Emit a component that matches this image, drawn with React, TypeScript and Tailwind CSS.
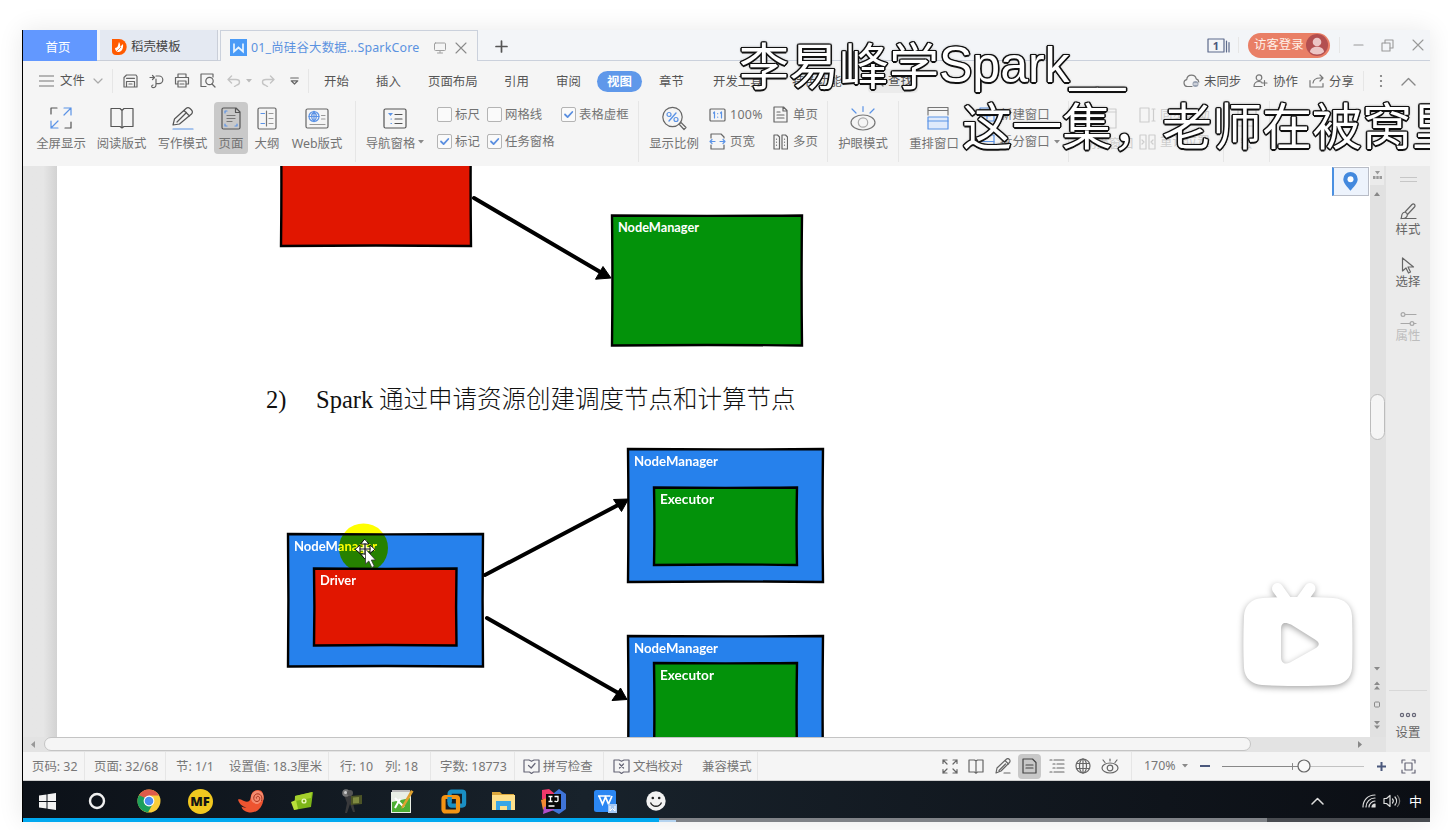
import React from "react";

type P = { children?: React.ReactNode; className?: string };

/* Line drawing on its own view box */
function Ico({ w, h, color = "#5a5a5a", sw = 1.2, children }: { w: number; h: number; color?: string; sw?: number; children: React.ReactNode }) {
  return (
    <svg width={w} height={h} viewBox={`0 0 ${w} ${h}`} fill="none" stroke={color} strokeWidth={sw} strokeLinecap="round" strokeLinejoin="round" className="block flex-none">
      {children}
    </svg>
  );
}

const BLUE = "#5b93e6";

function Cell({ children, className = "" }: P) {
  return <div className={`flex flex-none items-center ${className}`}>{children}</div>;
}

function Tri({ color = "#8a8a8a" }: { color?: string }) {
  return (
    <Ico w={6} h={4} color="none">
      <path d="M0 0h6L3 3.6z" fill={color} />
    </Ico>
  );
}

function Divider({ className = "" }: P) {
  return <div className={`flex-none border-l border-[#e6e6e6] ${className}`} />;
}

function Big({ label, className = "", children }: P & { label: string }) {
  return (
    <div className={`flex flex-none flex-col items-center pt-1 ${className}`}>
      <div className="flex h-[26px] items-center">{children}</div>
      <div className="mt-[3px] h-5 leading-5">{label}</div>
    </div>
  );
}

function Check({ label, on = false, className = "" }: P & { label: string; on?: boolean }) {
  return (
    <div className={`flex h-[27px] flex-none items-center gap-[3px] ${className}`}>
      <Ico w={15} h={15} color="#b4b4b4" sw={1}>
        <rect x=".5" y=".5" width="14" height="14" rx="1.5" fill="#fafafa" />
        {on && <path d="M4 7.500l2.600 2.600L11.300 5" stroke="#5b8fe0" strokeWidth="1.800" />}
      </Ico>
      <span>{label}</span>
    </div>
  );
}

function TabBar() {
  return (
    <div className="flex h-[31px] flex-none border-b border-[#cbd1dc] bg-[#f3f5f8]">
      <div className="-mb-px flex w-[74px] flex-none items-center justify-center bg-[#6298ff] pt-[4px] pr-1 text-white">首页</div>
      <div className="-mb-px ml-[3px] flex w-[118px] flex-none items-center border-r border-b border-[#c9ced8] bg-[#e4e9f2] pt-[4px] pl-3 text-[#444]">
        <svg width="15" height="16" viewBox="0 0 15 16" className="block">
          <path d="M0 0h7a7.500 7.800 0 0 1 0 16H4a4 4 0 0 1-4-4z" fill="#ff5a00" />
          <path d="M3 9c3 0 3-3 4-6 1 2 1.500 3 1 5l3-3c.5 4-1 8-4.500 8C4.500 13 3 11 3 9z" fill="#fff" />
          <path d="M5 12c1-1.500 2.500-2 4-4" stroke="#ff5a00" strokeWidth=".8" fill="none" />
        </svg>
        <span className="ml-1">稻壳模板</span>
      </div>
      <div className="-mb-px ml-0.5 flex w-[258px] flex-none items-center border-t border-r border-l border-[#cbd1dc] bg-[#f5f5f5] pt-[3px] pl-[9px] text-[#5b92e0]">
        <svg width="17" height="17" viewBox="0 0 17 17" className="block flex-none">
          <rect width="17" height="17" fill="#4a9bf7" />
          <path d="M4 4.500v8l4.500-4 4.500 4v-8" fill="none" stroke="#e8f4ff" strokeWidth="1.700" />
        </svg>
        <span className="ml-1 w-[183px] flex-none whitespace-nowrap tracking-[0.2px]">01_尚硅谷大数据...SparkCore</span>
        <Ico w={12} h={12} color="#a0a0a0" sw={1}>
          <rect x=".5" y="1" width="11" height="7.500" rx="1" />
          <path d="M6 8.500v2M3.500 11h5" />
        </Ico>
        <div className="ml-[9px]">
          <Ico w={12} h={12} color="#8a8a8a" sw={1.1}>
            <path d="M1 1l10 10M11 1L1 11" />
          </Ico>
        </div>
      </div>
      <Cell className="ml-[17px] pt-[3px]">
        <Ico w={13} h={13} color="#555" sw={1.7}>
          <path d="M6.500 1v11M1 6.500h11" />
        </Ico>
      </Cell>
      <div className="ml-auto flex items-center pr-[6px]">
        <Ico w={23} h={15} color="#5d6a8c" sw={1.2}>
          <rect x="1" y="1" width="16" height="13" />
          <path d="M19.500 3v11M22 4.500v9.500" />
          <text x="9" y="11.500" fontSize="11" fontWeight="700" textAnchor="middle" fill="#4b587c" stroke="none">1</text>
        </Ico>
        <Divider className="ml-2 h-4" />
        <div className="ml-[9px] flex h-[25px] w-[82px] items-center justify-between rounded-full bg-[#e97f66] pr-0.5 pl-[6px] text-[#fff0e8]">
          访客登录
          <svg width="22" height="22" viewBox="0 0 22 22" className="block">
            <circle cx="11" cy="11" r="11" fill="#b34f50" />
            <circle cx="11" cy="8" r="4.300" fill="#ecc5c5" />
            <path d="M4 18c0-7 14-7 14 0a11 11 0 0 1-14 0z" fill="#ecc5c5" />
          </svg>
        </div>
        <Divider className="mr-[13px] ml-[9px] h-4" />
        <Ico w={11} h={12} color="#999"><path d="M1 6h9" /></Ico>
        <div className="ml-[17px]">
          <Ico w={13} h={13} color="#999" sw={1.1}>
            <rect x="1" y="4" width="8" height="8" />
            <path d="M4 4V1h8v8H9" />
          </Ico>
        </div>
        <div className="ml-[18px]">
          <Ico w={12} h={12} color="#999" sw={1.1}><path d="M1 1l10 10M11 1L1 11" /></Ico>
        </div>
      </div>
    </div>
  );
}

function MenuRow() {
  return (
    <div className="flex h-10 flex-none items-center pl-4 whitespace-nowrap text-[#555]">
      <Cell className="w-[21px]"><Ico w={15} h={12} color="#777"><path d="M.5 1h14M.5 6h14M.5 11h14" /></Ico></Cell>
      <Cell className="w-[33px]">文件</Cell>
      <Cell className="w-[19px]"><Ico w={10} h={6} color="#aaa"><path d="M1 1l4 4 4-4" /></Ico></Cell>
      <Divider className="h-6 w-[11px]" />
      <Cell className="w-[26px] pb-px">
        <Ico w={15} h={14} color="#666">
          <path d="M3.500 1h9.500l1 1.500V13H1V3.500zM3.500 13V7.500h8V13M3.500 4.300h8M6 10h3" />
        </Ico>
      </Cell>
      <Cell className="w-[25px]">
        <Ico w={15} h={15} color="#666">
          <path d="M1 3.500h4M3.500 1.500L5.500 3.500 3.500 5.500M7 2h3a3.800 3.800 0 0 1 0 7.600H7M7 5v5.500c0 2-1.500 3.200-3 3.200s-2-2.200 0-2.700" />
        </Ico>
      </Cell>
      <Cell className="w-[26px] pb-px">
        <Ico w={16} h={15} color="#666">
          <path d="M4 4.500V1h8v3.500M4 11H1.500V4.500h13V11H12M4 8h8v6H4zM6 11h4" />
        </Ico>
      </Cell>
      <Cell className="w-[27px] pb-px">
        <Ico w={16} h={15} color="#666">
          <path d="M6 13.500H1V1h12v3" />
          <circle cx="9.500" cy="8" r="3.700" />
          <path d="M12 11l3 3" />
        </Ico>
      </Cell>
      <Cell className="w-[19px]"><Ico w={14} h={12} color="#c4c4c4" sw={1.4}><path d="M4.500 1L1 4.500 4.500 8M1.500 4.500H9c5 0 4 5 1 5.500L7.500 11.500" /></Ico></Cell>
      <Cell className="w-[15px]"><Tri color="#bbb" /></Cell>
      <Cell className="w-[29px]"><Ico w={14} h={12} color="#c4c4c4" sw={1.400}><path d="M9.500 1L13 4.500 9.500 8M12.500 4.500H5c-5 0-4 5-1 5.500L6.500 11.500" /></Ico></Cell>
      <Cell className="w-[18px]"><Ico w={9} h={8} color="#666"><path d="M.7 1h7.600M1.200 3.800h6.600L4.500 7z" /></Ico></Cell>
      <Divider className="h-6 w-4" />
      <Cell className="w-[52px] pt-px">开始</Cell>
      <Cell className="w-[52px] pt-px">插入</Cell>
      <Cell className="w-[76px] pt-px">页面布局</Cell>
      <Cell className="w-[52px] pt-px">引用</Cell>
      <Cell className="w-[41px] pt-px">审阅</Cell>
      <div className="mr-[17px] flex h-[21px] w-[45px] flex-none items-center justify-center rounded-full bg-[#5f98ea] pt-px font-bold text-white">视图</div>
      <Cell className="w-[54px] pt-px">章节</Cell>
      <Cell className="w-[79px] pt-px">开发工具</Cell>
      <Cell className="w-[76px] pt-px">特色功能</Cell>
      <Cell className="h-6 w-[50px] rounded bg-[#ebebeb] pl-1">
        <Ico w={12} h={12} color="#777"><circle cx="5" cy="5" r="4" /><path d="M8 8l3 3" /></Ico>
        <span className="ml-1">查找</span>
      </Cell>
      <div className="mr-[14px] ml-auto flex items-center">
        <Cell className="w-[21px]">
          <Ico w={17} h={14} color="#777">
            <path d="M9 12.500H4.500a3.500 3.500 0 0 1-.8-6.900C4 3 6 1.200 8.500 1.200c2.400 0 4.200 1.500 4.700 3.700 1.500.5 2.500 1.800 2.600 3.100" />
            <circle cx="12.500" cy="10" r="3" fill="#9aa3b3" stroke="none" />
            <path d="M11 10h3" stroke="#fff" />
          </Ico>
        </Cell>
        <Cell className="w-[49px] pt-px">未同步</Cell>
        <Cell className="w-5">
          <Ico w={15} h={14} color="#777">
            <circle cx="6" cy="3.700" r="2.800" />
            <path d="M9 12.500H1c0-3.500 2-5 5-5 1 0 2 .2 2.700.7M11.500 6.500v5M9 9h5" />
          </Ico>
        </Cell>
        <Cell className="w-9 pt-px">协作</Cell>
        <Cell className="w-5">
          <Ico w={16} h={14} color="#777">
            <path d="M1 6.500V13h13V9.500M4 9c.5-3.500 3-5 7-5h3M11 1l3 3-3 3" />
          </Ico>
        </Cell>
        <Cell className="w-[34px] pt-px">分享</Cell>
        <Divider className="h-5 w-4" />
        <Cell className="w-[22px]">
          <Ico w={4} h={14} color="none">
            <circle cx="2" cy="2" r="1.100" fill="#777" /><circle cx="2" cy="7" r="1.100" fill="#777" /><circle cx="2" cy="12" r="1.100" fill="#777" />
          </Ico>
        </Cell>
        <Ico w={15} h={9} color="#888" sw={1.400}><path d="M1 8l6.500-6.500L14 8" /></Ico>
      </div>
    </div>
  );
}

function Ribbon() {
  return (
    <div className="flex h-[65px] flex-none pl-2 whitespace-nowrap text-[#737373]">
      <Big label="全屏显示" className="w-[60px]">
        <Ico w={22} h={22} color="#555">
          <path d="M1 7V1h6M21 15v6h-6" />
          <path d="M14 1h7v7M21 1l-7 7M1 14v7h7M1 21l7-7" stroke={BLUE} />
        </Ico>
      </Big>
      <Big label="阅读版式" className="w-[61px]">
        <Ico w={24} h={22} color="#555">
          <path d="M12 3.500L10 1.500H1v18h9l2 1.500 2-1.500h9v-18h-9zM12 3.500V21" />
        </Ico>
      </Big>
      <Big label="写作模式" className="w-[61px]">
        <Ico w={24} h={24} color="#555">
          <path d="M2 19l1.500-6L15 2.500a3 3 0 0 1 4 0l1.500 1.500a3 3 0 0 1 0 4L8.500 18zM13 4.500l5.500 5.500M15.500 6.500L6 16" />
          <path d="M2 23h20" stroke={BLUE} />
        </Ico>
      </Big>
      <div className="mt-px ml-px flex h-[52px] w-[34px] flex-none flex-col items-center rounded bg-[#c9c9c9] pt-[3px]">
        <div className="flex h-[26px] items-center">
          <Ico w={20} h={23} color="#555">
            <path d="M1 2.500A1.500 1.500 0 0 1 2.500 1H15l4 4v15.500a1.500 1.500 0 0 1-1.500 1.500h-15A1.500 1.500 0 0 1 1 20.500zM14.500 1v4.500H19" />
            <path d="M6 8.500h8M6 11.500h8M6 14.500h5" stroke="#777" />
            <path d="M4 6V4h2M4 17v2h2M16 17v2h-2" stroke={BLUE} />
          </Ico>
        </div>
        <div className="mt-[3px] h-5 leading-5">页面</div>
      </div>
      <Big label="大纲" className="w-[38px]">
        <Ico w={20} h={23} color="#666">
          <rect x="1" y="1" width="18" height="21" rx="1.500" />
          <path d="M9.500 4v15" stroke="#777" />
          <path d="M12 6.500h4M12 11.500h4M12 16.500h4" stroke="#999" />
          <path d="M4 6.500h3.500M4 16.500h3.500" stroke={BLUE} />
        </Ico>
      </Big>
      <Big label="Web版式" className="w-[62px]">
        <Ico w={24} h={21} color="#666">
          <rect x="1" y="1" width="22" height="19" rx="1.500" />
          <circle cx="9" cy="8.500" r="5" stroke={BLUE} />
          <path d="M4 8.500h10M9 3.500v10M9 3.500c-3.200 3-3.200 7 0 10M9 3.500c3.200 3 3.200 7 0 10" stroke={BLUE} />
          <path d="M16.500 7.500h3.500M16.500 11h3.500M5 16.500h15" stroke="#999" />
        </Ico>
      </Big>
      <Divider className="ml-[7px] h-[61px]" />
      <Big label="导航窗格" className="ml-1 w-[61px]">
        <div className="pl-2">
          <Ico w={24} h={21} color="#555">
            <rect x="1" y="1" width="22" height="19" rx="1.500" />
            <path d="M12 6.500h7M12 11h7M12 15.500h7" />
            <path d="M8 11h.5M8 15.500h.5" stroke={BLUE} />
            <path d="M5 5h5L7.500 8z" fill={BLUE} stroke="none" />
          </Ico>
        </div>
      </Big>
      <div className="-ml-1 w-5 flex-none pt-[39px] pl-px"><Tri /></div>
      <div className="w-[201px] flex-none">
        <div className="flex">
          <Check label="标尺" className="w-[50px]" />
          <Check label="网格线" className="w-[74px]" />
          <Check label="表格虚框" on />
        </div>
        <div className="flex">
          <Check label="标记" on className="w-[50px]" />
          <Check label="任务窗格" on />
        </div>
      </div>
      <Divider className="h-[61px]" />
      <Big label="显示比例" className="ml-[5px] w-[60px]">
        <Ico w={26} h={25} color="#666">
          <circle cx="11.500" cy="11" r="9.700" />
          <path d="M18 18l2-1.500 5 5-2 2z" />
          <path d="M8 15l7-8" stroke={BLUE} strokeWidth="1.400" />
          <circle cx="8" cy="8.500" r="2" stroke={BLUE} /><circle cx="15" cy="13.500" r="2" stroke={BLUE} />
        </Ico>
      </Big>
      <div className="ml-[5px] w-16 flex-none">
        <div className="flex h-[27px] items-center gap-1">
          <Ico w={17} h={14} color="#666">
            <rect x="1" y="1" width="15" height="12" rx="1" />
            <path d="M4.500 5L5.500 4v6M11.500 5l1-1v6M8.700 5.500v.2M8.700 9v.2" stroke={BLUE} />
          </Ico>
          <span className="tracking-[0.3px]">100%</span>
        </div>
        <div className="flex h-[27px] items-center gap-1">
          <Ico w={17} h={17} color="#666">
            <path d="M2 5V1h10l3 3v1M2 12v4h13v-4" />
            <path d="M1 8.500h5M3 6.500l-2 2 2 2M16 8.500h-5M14 6.500l2 2-2 2" stroke={BLUE} />
          </Ico>
          <span>页宽</span>
        </div>
      </div>
      <div className="w-[54px] flex-none">
        <div className="flex h-[27px] items-center gap-[5px]">
          <Ico w={15} h={17} color="#666">
            <path d="M1 1h9.500l3.500 3.500V16H1zM10 1v4h4M4 6h3M4 9h7M4 12h7" />
          </Ico>
          <span>单页</span>
        </div>
        <div className="flex h-[27px] items-center gap-[5px]">
          <Ico w={15} h={16} color="#666">
            <path d="M1 1h3.500L6.500 3v12H1zM9 1h3.500L14.500 3v12H9zM3.500 5v.2M3.500 8v.2M3.500 11v.2M11.500 5v.2M11.500 8v.2M11.500 11v.2" />
          </Ico>
          <span>多页</span>
        </div>
      </div>
      <Divider className="h-[61px]" />
      <Big label="护眼模式" className="ml-[5px] w-[60px]">
        <Ico w={26} h={26} color="#777">
          <ellipse cx="13" cy="17.500" rx="12" ry="7.500" />
          <circle cx="13" cy="17.500" r="4.700" stroke="#aaa" />
          <path d="M2 4l4 4M13 1.500v5M24 4l-4 4" stroke={BLUE} />
        </Ico>
      </Big>
      <Divider className="ml-[5px] h-[61px]" />
      <Big label="重排窗口" className="ml-[5px] w-[60px]">
        <div className="pl-2">
          <Ico w={22} h={24} color="#777">
            <path d="M1 9V1.500h20V9M1 4.500h20" />
            <rect x="1" y="11" width="20" height="12" fill="#dfeafb" stroke={BLUE} />
            <path d="M1 15h20" stroke={BLUE} />
          </Ico>
        </div>
      </Big>
      <div className="ml-[15px] w-[89px] flex-none">
        <div className="flex h-[27px] items-center gap-1">
          <Ico w={17} h={15} color={BLUE}><rect x="1" y="1" width="14" height="13" /><path d="M1 4h14M8 6v6M5 9h6" /></Ico>
          <span>新建窗口</span>
        </div>
        <div className="flex h-[27px] items-center gap-1">
          <Ico w={17} h={15} color={BLUE}><rect x="1" y="1" width="14" height="13" /><path d="M1 7.500h14" /></Ico>
          <span>拆分窗口</span>
          <Tri />
        </div>
      </div>
      <Divider className="h-[61px]" />
      <Big label="切换窗口" className="ml-2.5 w-[60px] text-[#cdcdcd]">
        <Ico w={16} h={21} color="#cdcdcd"><rect x="1" y="1" width="14" height="19" /><path d="M1 4h14" /></Ico>
      </Big>
      <div className="w-[84px] flex-none text-[#cdcdcd]">
        <div className="flex h-[27px] items-center gap-1">
          <Ico w={17} h={16} color="#cdcdcd"><rect x="1" y="1" width="9" height="14" /><path d="M13 2h3M13 14h3M14.500 2v12" /></Ico>
          <span>同步滚动</span>
        </div>
        <div className="flex h-[27px] items-center gap-1">
          <Ico w={17} h={16} color="#cdcdcd"><path d="M1 1h6v14H1zM10 1h6v14h-6zM3 6l2 2-2 2M14 6l-2 2 2 2" /></Ico>
          <span>重设位置</span>
        </div>
      </div>
      <Divider className="h-[61px]" />
      <Big label="宏" className="w-[45px] text-[#cdcdcd]">
        <Ico w={20} h={20} color="#cdcdcd"><rect x="1" y="2" width="18" height="16" /><path d="M7 7v6l5-3z" /></Ico>
      </Big>
      <Divider className="h-[61px]" />
    </div>
  );
}

/* Slightly bowed hand-drawn box */
function Box({ x, y, w, h, fill }: { x: number; y: number; w: number; h: number; fill: string }) {
  const r = x + w;
  const b = y + h;
  return (
    <path
      d={`M${x} ${y}Q${x + w / 2} ${y + 0.8} ${r} ${y}Q${r - 0.8} ${y + h / 2} ${r} ${b}Q${x + w / 2} ${b - 1} ${x} ${b}Q${x + 0.8} ${y + h / 2} ${x} ${y}z`}
      fill={fill}
      stroke="#000"
      strokeWidth="2.400"
    />
  );
}

function Label({ x, y, w, children }: { x: number; y: number; w: number; children: string }) {
  return (
    <text x={x} y={y} textLength={w} lengthAdjust="spacingAndGlyphs" fontSize="13" fontWeight="700" fill="#fff" className="font-['Lato',sans-serif]">
      {children}
    </text>
  );
}

const RED = "#e11600";
const GREEN = "#03920a";
const NODE = "#2681ec";

function Page() {
  return (
    <div className="relative flex w-[1313px] flex-none flex-col overflow-hidden bg-white">
      <svg width="1313" height="204" viewBox="57 166 1313 204" className="block flex-none">
        <Box x={281} y={120} w={190} h={126} fill={RED} />
        <path d="M474 198L602 273" stroke="#000" strokeWidth="4" strokeLinecap="round" />
        <path d="M611 278l-15.500 1.200L603 266.500z" stroke="#000" strokeLinejoin="round" />
        <Box x={612} y={215.500} w={190} h={130} fill={GREEN} />
        <Label x={618} y={232} w={81}>NodeManager</Label>
      </svg>
      <p className="flex h-[60px] flex-none items-center pl-[209px] font-['Liberation_Serif','Noto_Sans_CJK_SC',serif] text-[24.5px] leading-[60px] whitespace-nowrap text-[#111]">
        <span className="w-[50px] flex-none">2)</span>
        <span className="w-[63px] flex-none">Spark</span>
        <span className="font-light">通过申请资源创建调度节点和计算节点</span>
      </p>
      <svg width="1313" height="307" viewBox="57 430 1313 307" className="isolate block flex-none">
        <rect x="57" y="430" width="1313" height="307" fill="#fff" />
        <Box x={288} y={534} w={195} h={132.500} fill={NODE} />
        <Label x={294} y={550.500} w={83}>NodeManager</Label>
        <Box x={314} y={568.500} w={142.500} h={77} fill={RED} />
        <Label x={320} y={585} w={36}>Driver</Label>
        <path d="M485 575L620 504M487 618L620 694" stroke="#000" strokeWidth="4" strokeLinecap="round" />
        <path d="M628.500 499l-15 .5 8 12zM627 699.500l-15 1 8.500-12.500z" stroke="#000" strokeLinejoin="round" />
        <Box x={628} y={449} w={195} h={133} fill={NODE} />
        <Label x={634} y={465.500} w={84}>NodeManager</Label>
        <Box x={654} y={487.500} w={143} h={77.500} fill={GREEN} />
        <Label x={660} y={504} w={54}>Executor</Label>
        <Box x={628} y={636} w={195} h={133} fill={NODE} />
        <Label x={634} y={652.500} w={84}>NodeManager</Label>
        <Box x={654} y={663} w={143} h={90} fill={GREEN} />
        <Label x={660} y={680} w={54}>Executor</Label>
        <circle cx="363.500" cy="548" r="24.500" fill="#ff0" className="mix-blend-multiply" />
        <g fill="none" strokeLinecap="square">
          <path d="M358 549h14M365 542v14" stroke="#fff" strokeWidth="3.200" />
          <path d="M365 539.500l4 4.500h-8zM365 558.500l4-4.500h-8zM355.500 549l4.500-4v8zM374.500 549l-4.500-4v8z" fill="#fff" stroke="#111" strokeWidth="1" />
          <path d="M360 549h10M365 544v10" stroke="#111" strokeWidth="1.200" />
        </g>
        <path d="M365.500 549v15l3.300-3 3 6.500 2.500-1.200-3-6.300h4.200z" fill="#fff" stroke="#333" strokeWidth=".8" />
      </svg>
      <div className="absolute top-px right-px flex h-[29px] w-[37px] items-center justify-center border border-l-2 border-[#b8bcc6] border-l-[#4a90e2] bg-[#edf3fc] pr-[2px]">
        <svg width="15" height="19" viewBox="0 0 15 19" className="block">
          <path d="M7.500 0a7.200 7.200 0 0 1 7.200 7.200c0 4-4.500 8-7.200 11.500C4.800 15.200.3 11.200.3 7.200A7.200 7.200 0 0 1 7.500 0z" fill="#4389de" />
          <circle cx="7.500" cy="7.200" r="3" fill="#fff" />
        </svg>
      </div>
      <svg width="130" height="125" viewBox="1233 572 130 125" className="absolute top-[406px] left-[1176px] block drop-shadow-[0_2px_3px_rgba(0,0,0,0.35)]">
        <path d="M1277 588.500l10 14M1309.500 588.500l-10 14" transform="translate(.5 0)" stroke="#fff" strokeWidth="11" strokeLinecap="round" />
        <path
          fillRule="evenodd"
          d="M1263 598c22-1.200 47-1.200 70 0 12 .6 18.500 8 19 18 .6 17 .6 36 0 52-.6 10-8 16.500-18 17-22 1.300-50 1.300-72 0-10-.5-17.500-7-18-17-.8-16-.8-35 0-52 .5-10 7-17.500 19-18zM1281 629v28c0 6 4 8 9 5.500l25-14c5-3 5-6 0-9l-24-15c-6-3-10-2-10 4.500z"
          fill="#fff"
        />
      </svg>
    </div>
  );
}

function ScrollBar() {
  return (
    <div className="flex w-4 flex-none flex-col items-center bg-[#e1e1e1] pr-0.5">
      <div className="flex h-[19px] w-full flex-none items-center justify-center bg-[#ebebeb]">
        <svg width="9" height="9" viewBox="0 0 9 9"><path d="M2 0h5L4.500 3.500zM0 5h2.500v3H0zM3.300 5h2.400v3H3.300zM6.500 5H9v3H6.500z" fill="#999" /></svg>
      </div>
      <svg width="6" height="4" viewBox="0 0 6 4" className="mt-[7px] block flex-none"><path d="M0 4h6L3 0z" fill="#888" /></svg>
      <div className="mt-[198px] h-[46px] w-[15px] flex-none rounded-full border border-[#bcbcbc] bg-[#f5f5f5]" />
      <svg width="8" height="64" viewBox="0 0 8 64" className="mt-[226px] block flex-none" fill="#8a8a8a">
        <path d="M1 1h6L4 4.500zM1 19h6L4 15.500zM1 23.500h6L4 20zM1 55h6L4 58.500zM1 59.500h6L4 63z" />
        <rect x="1.500" y="36" width="5" height="5" rx="1" fill="none" stroke="#8a8a8a" />
      </svg>
    </div>
  );
}

function SidePanel() {
  return (
    <div className="flex w-11 flex-none flex-col items-center bg-[#ebebeb] text-[#666]">
      <Cell className="mt-[11px] h-[5px]"><Ico w={17} h={5} color="#c6c6c6" sw={1}><path d="M0 .5h17M0 4.500h17" /></Ico></Cell>
      <Cell className="mt-[21px] h-[17px]">
        <Ico w={17} h={17} color="#666">
          <path d="M5 9l7-7.500a1.500 1.500 0 0 1 2.500 2.500L7.500 11.500M1 15.500h15M1 15.500c1-1 0-3 1.500-5S7 9 7.300 11.500 5 15.500 3 15.500" />
        </Ico>
      </Cell>
      <div className="mt-[2px] h-4 leading-4">样式</div>
      <Cell className="mt-[18px] h-[18px]">
        <Ico w={14} h={17} color="#666"><path d="M1.500 1v13l3.500-3 2.500 5 2-1-2.500-5h5.500z" /></Ico>
      </Cell>
      <div className="h-4 leading-4">选择</div>
      <Cell className="mt-5 h-[17px]">
        <Ico w={17} h={14} color="#a8a8a8"><circle cx="3" cy="2.500" r="1.900" /><path d="M5.500 2.500H16M1 11.500h9M14 11.500h2" /><circle cx="12" cy="11.500" r="1.900" /></Ico>
      </Cell>
      <div className="mt-px h-4 leading-4 text-[#bdbdbd]">属性</div>
      <div className="mt-[346px] w-[38px] border-t border-[#d8d8d8]" />
      <Cell className="mt-[21px] h-[6px]">
        <Ico w={18} h={6} color="#667"><circle cx="3" cy="3" r="1.600" /><circle cx="9" cy="3" r="1.600" /><circle cx="15" cy="3" r="1.600" /></Ico>
      </Cell>
      <div className="mt-[7px] h-4 leading-4">设置</div>
    </div>
  );
}

function HScroll() {
  return (
    <div className="flex flex-none bg-[#e3e3e3]">
      <Cell className="w-[21px] pl-2"><svg width="4" height="7" viewBox="0 0 4 7"><path d="M4 0v7L0 3.500z" fill="#999" /></svg></Cell>
      <div className="mb-px h-[14px] w-[1207px] flex-none rounded-full border border-[#c4c4c4] bg-[#f5f5f5]" />
      <Cell className="w-[135px] justify-end pr-[24px]"><svg width="4" height="7" viewBox="0 0 4 7"><path d="M0 0v7l4-3.500z" fill="#888" /></svg></Cell>
    </div>
  );
}

function StatusBar() {
  return (
    <div className="flex h-[29px] flex-none items-center border-b border-[#cfcfcf] bg-[#f5f5f5] pl-[9px] whitespace-nowrap text-[#777]">
      <Cell className="w-[52px] pt-0.5">页码: 32</Cell>
      <Divider className="h-7 w-[10px]" />
      <Cell className="w-[71px] pt-0.5">页面: 32/68</Cell>
      <Divider className="h-7 w-[11px]" />
      <Cell className="w-[53px] pt-0.5">节: 1/1</Cell>
      <Cell className="w-[99px] pt-0.5">设置值: 18.3厘米</Cell>
      <Divider className="h-7 w-[12px]" />
      <Cell className="w-[45px] pt-0.5">行: 10</Cell>
      <Cell className="w-[45px] pt-0.5">列: 18</Cell>
      <Divider className="h-7 w-[10px]" />
      <Cell className="w-[74px] pt-0.5">字数: 18773</Cell>
      <Divider className="h-7 w-[9px]" />
      <Cell className="w-5"><Ico w={17} h={15} color="#667"><path d="M6 1H1v12h5.500l2 1.500 2-1.500H16V1h-5L8.500 2.300 6 1M5.500 6.500L8.200 9 12 4.500" /></Ico></Cell>
      <Cell className="w-[60px] pt-0.5">拼写检查</Cell>
      <Divider className="h-7 w-[10px]" />
      <Cell className="w-5"><Ico w={17} h={15} color="#667"><path d="M6 1H1v12h5.500l2 1.500 2-1.500H16V1h-5L8.500 2.300 6 1M6.500 5l4 4M10.500 5l-4 4" /></Ico></Cell>
      <Cell className="w-[69px] pt-0.5">文档校对</Cell>
      <Cell className="w-[55px] pt-0.5">兼容模式</Cell>
      <Divider className="h-7 w-[185px]" />
      <Cell className="w-[26px]">
        <Ico w={16} h={15} color="#666"><path d="M1 4.500V1h4M1 1l4 4M11 1h4v3.500M15 1l-4 4M1 10.500V14h4M1 14l4-4M15 10.500V14h-4M15 14l-4-4" /></Ico>
      </Cell>
      <Cell className="w-[27px]">
        <Ico w={16} h={15} color="#666"><path d="M8 1.500V14M1 1h5.500L8 2l1.500-1H15v12H9.500L8 14.200 6.500 13H1z" /></Ico>
      </Cell>
      <Cell className="w-[23px]">
        <Ico w={17} h={16} color="#666"><path d="M1 15l1-5 9-8.500a2 2 0 0 1 3.500 3L6 13zM10 2.500l3.500 3.500M10.500 6L4 12.500M9 15h6" /></Ico>
      </Cell>
      <div className="mr-2 flex h-[25px] w-[23px] flex-none items-center justify-center rounded bg-[#c8c8c8]">
        <Ico w={15} h={16} color="#444"><path d="M1 1h9.500L14 4.500V15H1zM4 7h7M4 10h7" /></Ico>
      </div>
      <Cell className="w-[26px]">
        <Ico w={16} h={14} color="#666"><path d="M1 1h2M5 1h10M4 5h2M8 5h7M4 9h2M8 9h7M1 13h2M5 13h10" /></Ico>
      </Cell>
      <Cell className="w-[26px]">
        <Ico w={16} h={16} color="#666"><circle cx="8" cy="8" r="7" /><ellipse cx="8" cy="8" rx="3.500" ry="7" /><path d="M1.500 5.500h13M1.500 10.500h13M8 1v14" /></Ico>
      </Cell>
      <Cell className="w-[30px]">
        <Ico w={18} h={16} color="#666"><ellipse cx="9" cy="10" rx="8" ry="5" /><circle cx="9" cy="10" r="2.800" /><path d="M2 2l2 2.500M9 1v2M16 2l-2 2.500" /></Ico>
      </Cell>
      <Divider className="h-7 w-[13px]" />
      <Cell className="w-[38px]">170%</Cell>
      <Cell className="w-[17px]"><Tri /></Cell>
      <Cell className="w-[23px]"><Ico w={12} h={4} color="#4b587c" sw={2}><path d="M1 2h10" strokeLinecap="butt" /></Ico></Cell>
      <Cell className="w-[154px]">
        <Ico w={142} h={14} color="#888" sw={1}>
          <path d="M0 7.500h142" stroke="#c2c2c2" />
          <path d="M0 7.500h77M70.500 4.500v6" />
          <circle cx="82" cy="7" r="6" fill="#f8f8f8" stroke="#666" strokeWidth="1.200" />
        </Ico>
      </Cell>
      <Cell className="w-[25px]"><Ico w={11} h={11} color="#4b587c" sw={2}><path d="M5.500 1v9M1 5.500h9" strokeLinecap="butt" /></Ico></Cell>
      <Ico w={15} h={15} color="#667"><path d="M1 4V1h3M11 1h3v3M14 11v3h-3M4 14H1v-3" /><rect x="4" y="4" width="7" height="7" /></Ico>
    </div>
  );
}

function TaskIcon({ children, className = "" }: P) {
  return <div className={`flex flex-none items-center justify-center ${className}`}>{children}</div>;
}

function TaskBar() {
  return (
    <div className="-ml-px flex h-[37px] flex-none items-center bg-linear-to-r from-[#0c1118] via-[#18222b] via-40% to-[#0b0e14] pt-[3px] pr-2 text-white">
      <TaskIcon className="w-[50px]">
        <svg width="17" height="17" viewBox="0 0 17 17" fill="#f2f2f2"><path d="M0 2.500l7.500-1v6.500H0zM8.500 1.300L17 0v8H8.500zM0 9h7.500v6.500L0 14.500zM8.500 9H17v8l-8.500-1.300z" /></svg>
      </TaskIcon>
      <TaskIcon className="w-[50px]">
        <svg width="18" height="18" viewBox="0 0 18 18"><circle cx="9" cy="9" r="7" fill="none" stroke="#f0f0f0" strokeWidth="2.400" /></svg>
      </TaskIcon>
      <TaskIcon className="w-[54px]">
        <svg width="24" height="24" viewBox="0 0 24 24">
          <circle cx="12" cy="12" r="11.500" fill="#f9cd3a" />
          <path d="M12 12L2 6.200A11.500 11.500 0 0 1 22 6.500H12z" fill="#df5b4a" />
          <path d="M2 6.200A11.500 11.500 0 0 0 11 23.500l5-9L12 12z" fill="#1d9f5c" />
          <path d="M2 6.200l5 8 4-4z" fill="#1d9f5c" />
          <circle cx="12" cy="12" r="5.400" fill="#fff" /><circle cx="12" cy="12" r="4.300" fill="#4a8df0" />
        </svg>
      </TaskIcon>
      <TaskIcon className="w-12">
        <div className="flex size-[25px] items-center justify-center rounded-full bg-[#f2c81f] font-['Open_Sans',sans-serif] text-[13px] font-extrabold text-[#151515]">MF</div>
      </TaskIcon>
      <TaskIcon className="w-[54px]">
        <svg width="26" height="23" viewBox="0 0 26 23">
          <path d="M0 9.500c3-1 4 .5 6 1.500 3 1.500 6 1 6.500-3C13 3 15.500 0 20 0c4 0 6 3.500 5.500 8.500C25 17 19.500 22.500 13 22.500c-5 0-9-2.500-9.500-6 1.500 1 3.500 1.200 5 1C4 16.500 1 13.500 0 9.500z" fill="#ee5430" />
          <path d="M13 8c0-5 4-8 8-7 4 1 5 5 4.500 8.500L20 14c-4 0-7-2-7-6z" fill="#f58a6e" />
          <path d="M18.500 8.500a1.500 1.500 0 0 1 2-2c2 1 1.500 5-1.500 5-4 0-4.500-6-.5-7.500 4-1 6.500 3 5 7" fill="none" stroke="#a8321c" strokeWidth="1" />
        </svg>
      </TaskIcon>
      <TaskIcon className="w-[47px]">
        <svg width="24" height="20" viewBox="0 0 24 20">
          <path d="M5 5l18-4-2 15L4 19z" fill="#7db518" /><path d="M1 11l5-2 2 9-4 1z" fill="#b8e03a" /><path d="M5 5l17-4-1 6L5 10z" fill="#a4d02c" />
          <circle cx="14" cy="10" r="2.600" fill="#e9f5b8" /><circle cx="14" cy="10" r="1.200" fill="#7fae1c" />
        </svg>
      </TaskIcon>
      <TaskIcon className="w-[54px]">
        <svg width="22" height="24" viewBox="0 0 22 24">
          <path d="M3 6l7-2 2 10 2 9h-2l-3-8-3 9H4l2-10z" fill="#38393b" /><circle cx="5" cy="4" r="3.800" fill="#777" /><circle cx="9" cy="4" r="3" fill="#555" /><circle cx="4.500" cy="3.500" r="1.500" fill="#ccc" />
          <path d="M10 7l11-1v9l-11 1z" fill="#4c5426" /><path d="M12 8.500l6-.5v6l-6 .5z" fill="#7f8a40" />
        </svg>
      </TaskIcon>
      <TaskIcon className="w-[46px]">
        <svg width="23" height="25" viewBox="0 0 23 25">
          <rect x="0" y="3" width="20" height="21" fill="#e9efe6" /><path d="M1 13l18-4v14H1z" fill="#4eae33" /><path d="M1 1h18v2H1z" fill="#bbb" /><path d="M4 9l9 9M4 19l5-9" stroke="#fff" strokeWidth="2" />
          <path d="M20 1l2.500 1.500L13 18l-2.500 2 .3-3z" fill="#dfa12f" />
        </svg>
      </TaskIcon>
      <TaskIcon className="w-[57px]">
        <svg width="26" height="25" viewBox="0 0 26 25" fill="none" strokeWidth="4.200">
          <rect x="8.600" y="2.600" width="14.500" height="14" rx="2" stroke="#1a8fc4" />
          <rect x="2.500" y="8" width="14.500" height="14.500" rx="2" stroke="#f49414" />
          <path d="M8.600 13V8" stroke="#1a8fc4" />
        </svg>
      </TaskIcon>
      <TaskIcon className="w-[43px]">
        <svg width="23" height="20" viewBox="0 0 23 20">
          <path d="M0 1h8l2 2h12v4H0z" fill="#dda83c" /><path d="M0 4h23v15H0z" fill="#ffe08a" /><path d="M4 10h15v9h-4v-4H8v4H4z" fill="#3aa6e6" />
        </svg>
      </TaskIcon>
      <TaskIcon className="w-[57px]">
        <svg width="25" height="25" viewBox="0 0 25 25">
          <path d="M1 1l7-1 6 5-6 8-7-3z" fill="#f0396a" /><path d="M0 11l6-2v8l-4 4z" fill="#f58a32" /><path d="M13 4l5-4 7 5v15l-7 5-9-5z" fill="#3f74d8" /><path d="M3 18l9-2 1 5-11 4z" fill="#b04fc9" />
          <rect x="5" y="5" width="15" height="15" fill="#080808" />
          <path d="M7.500 7.500h4M9.500 7.500v5M7.500 12.500h4M13.500 7.500h3.500v4c0 1.300-2.500 1.500-3.500.5M7.500 17h6" stroke="#fff" strokeWidth="1.300" fill="none" />
        </svg>
      </TaskIcon>
      <TaskIcon className="w-[45px]">
        <svg width="24" height="24" viewBox="0 0 24 24">
          <rect width="22" height="22" x="1" y="1" rx="2.500" fill="#2b87f3" />
          <path d="M5 7h12.500M6 7l3.500 8L12.500 8l3 7L19 7" fill="none" stroke="#fff" strokeWidth="1.700" />
          <rect x="15" y="15" width="9" height="9" fill="#a5c9f5" /><path d="M17 17v5l2.500-2.500L22 22v-5" stroke="#fff" fill="none" />
        </svg>
      </TaskIcon>
      <TaskIcon className="w-[57px]">
        <svg width="20" height="20" viewBox="0 0 20 20">
          <circle cx="10" cy="10" r="9.700" fill="#f2f2f2" /><circle cx="6.800" cy="7" r="1.300" fill="#222" /><circle cx="13.200" cy="7" r="1.300" fill="#222" /><path d="M4.500 11.500c2 5 9 5 11 0" fill="none" stroke="#222" strokeWidth="1.300" />
        </svg>
      </TaskIcon>
      <div className="ml-auto flex items-center">
        <Ico w={13} h={8} color="#ddd" sw={1.500}><path d="M1 7l5.500-5.500L12 7" /></Ico>
        <div className="ml-[38px]">
          <Ico w={14} h={14} color="#ddd" sw={1.200}>
            <path d="M1 13C1 6 6 1 13 1M4 13c0-5 4-9 9-9M7 13c0-3 3-6 6-6" /><path d="M10 13c0-1.500 1.500-3 3-3v3z" fill="#ddd" />
          </Ico>
        </div>
        <div className="ml-[7px]">
          <Ico w={18} h={14} color="#ddd" sw={1.200}>
            <path d="M1 4.500h2.500L7 1.500v11L3.500 9.500H1zM9.500 5c1 1.200 1 2.800 0 4M12 3c2 2.300 2 5.700 0 8" /><path d="M14.500 1.500c2.600 3.300 2.600 7.700 0 11" stroke="#777" />
          </Ico>
        </div>
        <span className="ml-2 text-[13px]">中</span>
      </div>
    </div>
  );
}

function VideoProgress() {
  return (
    <div className="-ml-px flex h-1 flex-none">
      <div className="w-[637px] bg-[#00a8ef]" />
      <div className="w-[17px] border-t-2 border-[#7e8287] bg-[#b4d3ef]" />
      <div className="w-[591px] bg-[#808388]" />
      <div className="flex-1 bg-[#484b50]" />
    </div>
  );
}

const comment =
  "whitespace-nowrap font-['Liberation_Sans','Noto_Sans_CJK_SC',sans-serif] text-[50px] leading-[60px] text-white [text-shadow:1.5px_0_0_#111,-1.5px_0_0_#111,0_1.5px_0_#111,0_-1.5px_0_#111,1.1px_1.1px_0_#111,-1.1px_1.1px_0_#111,1.1px_-1.1px_0_#111,-1.1px_-1.1px_0_#111,0_0_3px_#111]";

export default function App() {
  return (
    <div className="h-[830px] w-[1448px] overflow-hidden bg-white pt-[30px] pl-[22px] font-['Noto_Sans','Noto_Sans_CJK_SC',sans-serif] text-[12.4px] leading-5">
      <div className="relative flex h-[792px] w-[1408px] flex-col overflow-clip border-l border-black bg-[#f5f5f5] shadow-[0_0_24px_rgba(0,0,0,0.09)]">
        <TabBar />
        <MenuRow />
        <Ribbon />
        <div className="flex h-[586px] flex-none">
          <div className="flex flex-none flex-col">
            <div className="flex h-[571px] flex-none">
              <div className="w-[34px] flex-none bg-linear-to-r from-[#e6e6e6] from-60% to-[#d2d2d2]" />
              <Page />
              <ScrollBar />
            </div>
            <HScroll />
          </div>
          <SidePanel />
        </div>
        <StatusBar />
        <TaskBar />
        <VideoProgress />
        <div className="absolute top-[5px] left-[716px] w-[691px] overflow-clip">
          <div className={comment}>
            <span className="relative top-[3px]">李易峰学</span>
            <span>Spark</span>
            <span className="relative -top-px">__</span>
          </div>
          <div className={`pt-[3px] pl-[223px] ${comment}`}>这一集，老师在被窝里</div>
        </div>
      </div>
    </div>
  );
}
